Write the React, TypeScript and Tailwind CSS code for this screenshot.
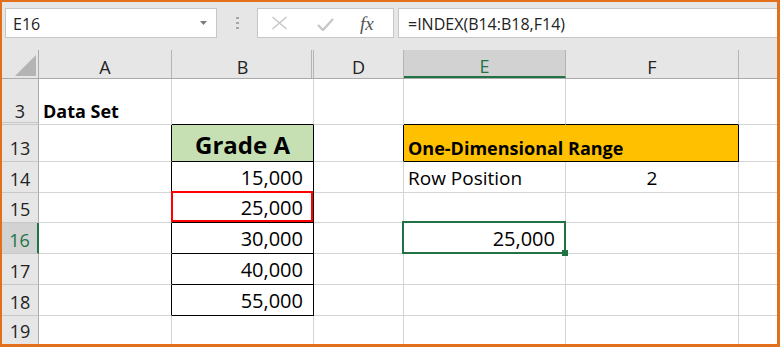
import type { ReactNode } from 'react';

const LIGHT = 'border-r-[#d4d4d4] border-b-[#d4d4d4]';
const R_BLACK = 'border-r-black border-b-[#d4d4d4]';
const B_BLACK = 'border-r-[#d4d4d4] border-b-black';
const RB_BLACK = 'border-r-black border-b-black';

interface CellProps {
  w: string;
  lines?: string;
  className?: string;
  children?: ReactNode;
}

function Cell({ w, lines = LIGHT, className = '', children }: CellProps) {
  return (
    <div className={`relative flex shrink-0 items-end border-r border-b pb-[4px] ${w} ${lines} ${className}`}>
      {children}
    </div>
  );
}

function RowHead({ n, selected = false, className = '' }: { n: string; selected?: boolean; className?: string }) {
  return (
    <div
      className={`flex w-[37px] shrink-0 items-end justify-center border-b border-b-[#c8c8c8] pb-[4px] text-[18px] leading-none ${
        selected
          ? 'border-r-2 border-r-[#217346] bg-[#d2d2d2] text-[#217346]'
          : 'border-r border-r-[#ababab] bg-[#e6e6e6] text-[#222]'
      } ${className}`}
    >
      {n}
    </div>
  );
}

function Num({ v }: { v: string }) {
  return <span className="w-full pr-[10px] text-right text-[20px] leading-none text-black">{v}</span>;
}

function ColHead({ w, label, className = '' }: { w: string; label: string; className?: string }) {
  return (
    <div className={`flex shrink-0 items-end justify-center border-r border-r-[#b4b4b4] pb-[2px] text-[18px] leading-none text-[#222] ${w} ${className}`}>
      {label}
    </div>
  );
}

export default function App() {
  return (
    <div className="flex h-[347px] w-[780px] flex-col overflow-hidden border-t-2 border-r-[3px] border-b-[3px] border-l-2 border-[#e2701b] bg-[#e6e6e6] font-['Open_Sans',sans-serif]">
      {/* Formula bar */}
      <div className="flex h-[48px] shrink-0 items-start pt-[6px]">
        <div className="ml-[3px] flex h-[30px] w-[212px] items-center justify-between border border-[#c6c6c6] bg-white pt-[2px] pr-[9px] pl-[7px]">
          <span className="text-[16px] leading-none text-[#222]">E16</span>
          <svg width="7" height="4" viewBox="0 0 7 4" className="mb-[2px]">
            <path d="M0 0 H7 L3.5 4 Z" fill="#7a7a7a" />
          </svg>
        </div>
        <div className="flex h-[30px] w-[40px] flex-col items-center justify-center gap-[3px]">
          <span className="h-[2px] w-[3px] bg-[#a6a6a6]" />
          <span className="h-[2px] w-[3px] bg-[#a6a6a6]" />
          <span className="h-[2px] w-[3px] bg-[#a6a6a6]" />
        </div>
        <div className="flex h-[30px] w-[137px] items-center border border-[#c6c6c6] bg-white">
          <svg width="17" height="14" viewBox="0 0 17 14" className="ml-[13px]">
            <path d="M1.5 1 L15.5 13 M15.5 1 L1.5 13" stroke="#c8c8c8" strokeWidth="1.6" />
          </svg>
          <svg width="17" height="13" viewBox="0 0 17 13" className="ml-[29px] mt-[2px]">
            <path d="M1 7 L6 12 L16 1" stroke="#c8c8c8" strokeWidth="2.4" fill="none" />
          </svg>
          <span className="ml-[26px] font-['Liberation_Serif',serif] text-[19px] leading-none italic text-[#555]">fx</span>
        </div>
        <div className="ml-[4px] flex h-[30px] flex-1 items-center border border-r-0 border-[#c6c6c6] bg-white pt-[2px] pl-[9px]">
          <span className="text-[16px] leading-none text-[#222]">=INDEX(B14:B18,F14)</span>
        </div>
      </div>

      {/* Column headers */}
      <div className="flex h-[29px] shrink-0 border-b border-b-[#ababab]">
        <div className="flex w-[37px] shrink-0 items-end justify-end border-r border-r-[#ababab] pr-[2px] pb-[2px]">
          <svg width="21" height="21" viewBox="0 0 21 21">
            <path d="M21 0 V21 H0 Z" fill="#b4b4b4" />
          </svg>
        </div>
        <ColHead w="w-[133px]" label="A" />
        <ColHead w="w-[142px]" label="B" className="shadow-[inset_-1px_0_0_#e6e6e6,inset_-2px_0_0_#b4b4b4]" />
        <ColHead w="w-[90px]" label="D" />
        <div className="flex w-[162px] shrink-0 items-end justify-center border-r border-b-2 border-r-[#b4b4b4] border-b-[#217346] bg-[#d2d2d2] pb-[1px] text-[18px] leading-none text-[#217346]">
          E
        </div>
        <ColHead w="w-[173px]" label="F" />
        <div className="flex-1" />
      </div>

      {/* Row 3 */}
      <div className="flex h-[46px] shrink-0 bg-white">
        <RowHead n="3" className="shadow-[inset_0_-1px_0_#e6e6e6,inset_0_-2px_0_#c8c8c8]" />
        <Cell w="w-[133px]">
          <span className="pl-[4px] text-[18px] leading-none font-bold text-black">Data Set</span>
        </Cell>
        <Cell w="w-[142px]" lines={B_BLACK} />
        <Cell w="w-[90px]" />
        <Cell w="w-[162px]" lines={B_BLACK} />
        <Cell w="w-[173px]" lines={B_BLACK} />
        <Cell w="flex-1" className="border-r-0" />
      </div>

      {/* Row 13 */}
      <div className="flex h-[37px] shrink-0 bg-white">
        <RowHead n="13" />
        <Cell w="w-[133px]" lines={R_BLACK} />
        <Cell w="w-[142px]" lines={RB_BLACK} className="justify-center bg-[#c6e0b4]">
          <span className="text-[24px] leading-none font-bold text-black">Grade A</span>
        </Cell>
        <Cell w="w-[90px]" lines={R_BLACK} />
        <Cell w="w-[335px]" lines={RB_BLACK} className="bg-[#ffc000]">
          <span className="pl-[4px] text-[18px] leading-none font-bold text-black">One-Dimensional Range</span>
        </Cell>
        <Cell w="flex-1" className="border-r-0" />
      </div>

      {/* Row 14 */}
      <div className="flex h-[31px] shrink-0 bg-white">
        <RowHead n="14" />
        <Cell w="w-[133px]" lines={R_BLACK} />
        <Cell w="w-[142px]" lines={RB_BLACK}>
          <Num v="15,000" />
        </Cell>
        <Cell w="w-[90px]" />
        <Cell w="w-[162px]">
          <span className="pl-[4px] text-[19px] leading-none text-black">Row Position</span>
        </Cell>
        <Cell w="w-[173px]" className="justify-center">
          <span className="text-[19px] leading-none text-black">2</span>
        </Cell>
        <Cell w="flex-1" className="border-r-0" />
      </div>

      {/* Row 15 */}
      <div className="flex h-[30px] shrink-0 bg-white">
        <RowHead n="15" />
        <Cell w="w-[133px]" lines={R_BLACK} />
        <Cell w="w-[142px]" lines={RB_BLACK}>
          <div className="absolute -top-[2px] -left-[1px] right-0 bottom-0 z-10 border-2 border-[#ff0000]" />
          <Num v="25,000" />
        </Cell>
        <Cell w="w-[90px]" />
        <Cell w="w-[162px]" />
        <Cell w="w-[173px]" />
        <Cell w="flex-1" className="border-r-0" />
      </div>

      {/* Row 16 */}
      <div className="flex h-[31px] shrink-0 bg-white">
        <RowHead n="16" selected />
        <Cell w="w-[133px]" lines={R_BLACK} />
        <Cell w="w-[142px]" lines={RB_BLACK}>
          <Num v="30,000" />
        </Cell>
        <Cell w="w-[90px]" />
        <Cell w="w-[162px]">
          <div className="absolute -top-[2px] -right-[1px] -bottom-[1px] -left-[2px] z-10 border-2 border-[#217346]" />
          <div className="absolute -right-[3px] -bottom-[3px] z-20 h-[6px] w-[6px] bg-[#217346]" />
          <Num v="25,000" />
        </Cell>
        <Cell w="w-[173px]" />
        <Cell w="flex-1" className="border-r-0" />
      </div>

      {/* Row 17 */}
      <div className="flex h-[31px] shrink-0 bg-white">
        <RowHead n="17" />
        <Cell w="w-[133px]" lines={R_BLACK} />
        <Cell w="w-[142px]" lines={RB_BLACK}>
          <Num v="40,000" />
        </Cell>
        <Cell w="w-[90px]" />
        <Cell w="w-[162px]" />
        <Cell w="w-[173px]" />
        <Cell w="flex-1" className="border-r-0" />
      </div>

      {/* Row 18 */}
      <div className="flex h-[31px] shrink-0 bg-white">
        <RowHead n="18" />
        <Cell w="w-[133px]" lines={R_BLACK} />
        <Cell w="w-[142px]" lines={RB_BLACK}>
          <Num v="55,000" />
        </Cell>
        <Cell w="w-[90px]" />
        <Cell w="w-[162px]" />
        <Cell w="w-[173px]" />
        <Cell w="flex-1" className="border-r-0" />
      </div>

      {/* Row 19 */}
      <div className="flex min-h-0 flex-1 bg-white">
        <RowHead n="19" className="border-b-0" />
        <Cell w="w-[133px]" className="border-b-0" />
        <Cell w="w-[142px]" className="border-b-0" />
        <Cell w="w-[90px]" className="border-b-0" />
        <Cell w="w-[162px]" className="border-b-0" />
        <Cell w="w-[173px]" className="border-b-0" />
        <Cell w="flex-1" className="border-r-0 border-b-0" />
      </div>
    </div>
  );
}
